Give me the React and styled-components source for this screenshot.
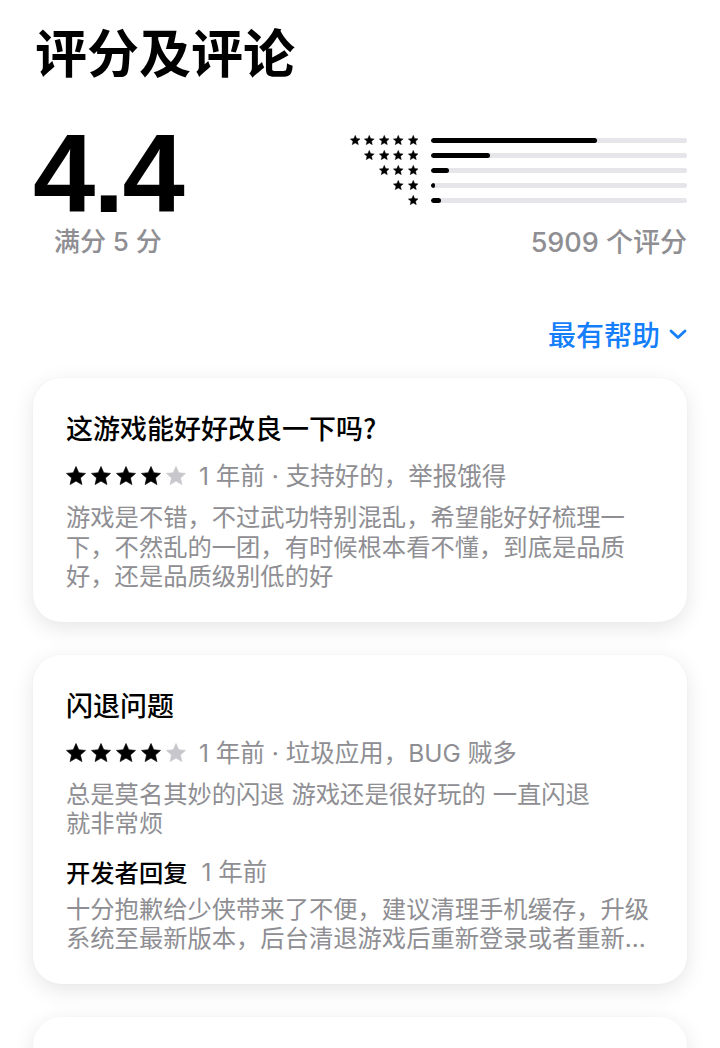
import styled, { createGlobalStyle } from "styled-components";

const GlobalStyle = createGlobalStyle`
  body {
    margin: 0;
    background: #ffffff;
    font-family: "Inter", "Noto Sans CJK SC", sans-serif;
    color: #000000;
  }
`;

const Page = styled.div`
  width: 720px;
  box-sizing: border-box;
  padding: 0 33px 40px;
`;

const Title = styled.h1`
  margin: 0;
  padding-top: 25px;
  padding-left: 2px;
  font-family: "Noto Sans CJK SC", sans-serif;
  font-size: 52px;
  line-height: 52px;
  font-weight: 700;
`;

const RatingRow = styled.div`
  display: flex;
  justify-content: space-between;
  align-items: flex-start;
  margin-top: 44px;
`;

const ScoreBlock = styled.div`
  display: flex;
  flex-direction: column;
  align-items: center;
`;

const BigScore = styled.div`
  font-family: "Liberation Sans", "Inter", sans-serif;
  font-size: 112px;
  line-height: 106px;
  font-weight: 700;
  letter-spacing: -2px;
`;

const GrayText = styled.div`
  color: #8e8e93;
  font-size: ${(p) => p.$size || 26}px;
  line-height: 30px;
  font-weight: ${(p) => p.$weight || 500};
  margin-top: ${(p) => p.$top || 0}px;
`;

const Histogram = styled.div`
  display: flex;
  flex-direction: column;
  align-items: flex-end;
  padding-top: 12px;
`;

const HistRow = styled.div`
  display: flex;
  align-items: center;
  height: 15px;
`;

const SmallStars = styled.div`
  display: flex;
  justify-content: flex-end;
  gap: 4px;
  width: 74px;
`;

const Track = styled.div`
  margin-left: 13px;
  width: 256px;
  height: 5px;
  border-radius: 3px;
  background: #e5e5ea;
  overflow: hidden;
`;

const Fill = styled.div`
  height: 100%;
  border-radius: 3px;
  background: #000000;
`;

const SortRow = styled.div`
  display: flex;
  justify-content: flex-end;
  align-items: center;
  gap: 9px;
  margin-top: 61px;
  color: #157efb;
  font-family: "Noto Sans CJK SC", sans-serif;
  font-size: 28px;
  line-height: 30px;
  font-weight: 500;
`;

const Cards = styled.div`
  display: flex;
  flex-direction: column;
  gap: 33px;
  margin-top: 29px;
`;

const Card = styled.div`
  background: #ffffff;
  border-radius: 28px;
  box-shadow: 0 6px 22px rgba(0, 0, 0, 0.1), 0 0 2px rgba(0, 0, 0, 0.04);
  padding: 33px 33px 30px;
`;

const CardTitle = styled.div`
  font-family: "Noto Sans CJK SC", sans-serif;
  font-size: 27px;
  line-height: 34px;
  font-weight: 500;
`;

const MetaRow = styled.div`
  display: flex;
  align-items: center;
  gap: 13px;
  margin-top: 14px;
  height: 34px;
`;

const CardStars = styled.div`
  display: flex;
  gap: 5px;
`;

const MetaText = styled.span`
  color: #8e8e93;
  font-size: 24.5px;
  line-height: 34px;
`;

const Body = styled.div`
  margin-top: ${(p) => p.$top || 10}px;
  color: #8e8e93;
  font-size: 24.3px;
  line-height: 29.5px;
  white-space: pre-line;
  ${(p) =>
    p.$clamp &&
    `
    display: -webkit-box;
    -webkit-box-orient: vertical;
    -webkit-line-clamp: ${p.$clamp};
    overflow: hidden;
  `}
`;

const ReplyHead = styled.div`
  display: flex;
  align-items: center;
  gap: 14px;
  margin-top: 16px;
  line-height: 34px;
`;

const ReplyLabel = styled.span`
  font-family: "Noto Sans CJK SC", sans-serif;
  font-size: 24.3px;
  font-weight: 500;
`;

const STAR_POINTS =
  "12,0.6 15.3,8.1 23.41,8.89 17.3,14.3 19.05,22.31 12,18.1 4.95,22.31 6.7,14.3 0.59,8.89 8.7,8.1";

function Star({ size, color }) {
  return (
    <svg width={size} height={size} viewBox="0 0 24 24">
      <polygon points={STAR_POINTS} fill={color} strokeLinejoin="round" stroke={color} strokeWidth="0.8" />
    </svg>
  );
}

const distribution = [
  { stars: 5, pct: 65 },
  { stars: 4, pct: 23 },
  { stars: 3, pct: 7 },
  { stars: 2, pct: 1.6 },
  { stars: 1, pct: 4 },
];

const reviews = [
  {
    title: "这游戏能好好改良一下吗?",
    rating: 4,
    meta: "1 年前 · 支持好的，举报饿得",
    body: "游戏是不错，不过武功特别混乱，希望能好好梳理一下，不然乱的一团，有时候根本看不懂，到底是品质好，还是品质级别低的好",
  },
  {
    title: "闪退问题",
    rating: 4,
    meta: "1 年前 · 垃圾应用，BUG 贼多",
    body: "总是莫名其妙的闪退 游戏还是很好玩的 一直闪退\n就非常烦",
    reply:
      "十分抱歉给少侠带来了不便，建议清理手机缓存，升级系统至最新版本，后台清退游戏后重新登录或者重新下载游戏尝试，给您带来的不便敬请谅解。",
  },
  {
    title: "画面很好",
    rating: 5,
    meta: "1 年前 · 江湖少侠",
    body: "画面精致，剧情也不错，就是有点肝。",
  },
];

function CardStarRow({ rating }) {
  return (
    <CardStars>
      {[1, 2, 3, 4, 5].map((n) => (
        <Star key={n} size={20} color={n <= rating ? "#000000" : "#c7c7cc"} />
      ))}
    </CardStars>
  );
}

function App() {
  return (
    <Page>
      <GlobalStyle />
      <Title>评分及评论</Title>

      <RatingRow>
        <ScoreBlock>
          <BigScore>4.4</BigScore>
          <GrayText>满分 5 分</GrayText>
        </ScoreBlock>
        <Histogram>
          {distribution.map((d) => (
            <HistRow key={d.stars}>
              <SmallStars>
                {Array.from({ length: d.stars }).map((_, i) => (
                  <Star key={i} size={10.5} color="#000000" />
                ))}
              </SmallStars>
              <Track>
                <Fill style={{ width: `${d.pct}%` }} />
              </Track>
            </HistRow>
          ))}
          <GrayText $size={27} $top={20}>
            5909 个评分
          </GrayText>
        </Histogram>
      </RatingRow>

      <SortRow>
        最有帮助
        <svg width="18" height="11" viewBox="0 0 18 11">
          <polyline
            points="2,2 9,8.5 16,2"
            fill="none"
            stroke="#157efb"
            strokeWidth="2.8"
            strokeLinecap="round"
            strokeLinejoin="round"
          />
        </svg>
      </SortRow>

      <Cards>
        {reviews.map((r) => (
          <Card key={r.title}>
            <CardTitle>{r.title}</CardTitle>
            <MetaRow>
              <CardStarRow rating={r.rating} />
              <MetaText>{r.meta}</MetaText>
            </MetaRow>
            <Body>{r.body}</Body>
            {r.reply && (
              <>
                <ReplyHead>
                  <ReplyLabel>开发者回复</ReplyLabel>
                  <MetaText>1 年前</MetaText>
                </ReplyHead>
                <Body $top={6} $clamp={2}>
                  {r.reply}
                </Body>
              </>
            )}
          </Card>
        ))}
      </Cards>
    </Page>
  );
}

export default App;
